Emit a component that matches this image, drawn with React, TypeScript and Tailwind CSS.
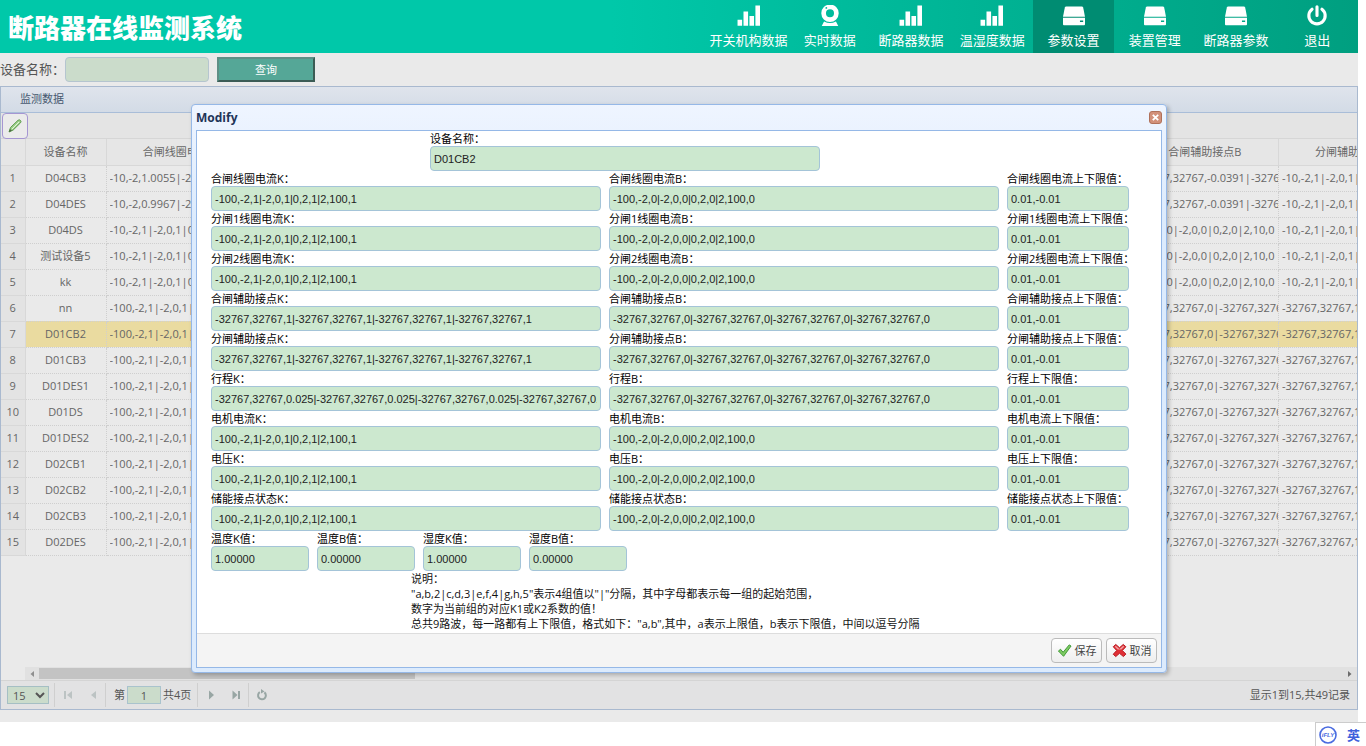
import React, { useId } from "react";

type NavIcon = "bars" | "camera" | "disk" | "power";

const navItems: { label: string; icon: NavIcon; active?: boolean }[] = [
  { label: "开关机构数据", icon: "bars" },
  { label: "实时数据", icon: "camera" },
  { label: "断路器数据", icon: "bars" },
  { label: "温湿度数据", icon: "bars" },
  { label: "参数设置", icon: "disk", active: true },
  { label: "装置管理", icon: "disk" },
  { label: "断路器参数", icon: "disk" },
  { label: "退出", icon: "power" },
];

const columns = [
  "合闸线圈电流K",
  "合闸线圈电流B",
  "分闸1线圈电流K",
  "分闸1线圈电流B",
  "分闸2线圈电流K",
  "分闸2线圈电流B",
  "合闸辅助接点K",
  "合闸辅助接点B",
  "分闸辅助接点K",
];

const SHORT_K = "-10,-2,1|-2,0,1|0,2,1|2,10,1";
const SHORT_B = "-10,-2,0|-2,0,0|0,2,0|2,10,0";
const COIL_K = "-100,-2,1|-2,0,1|0,2,1|2,100,1";
const COIL_B = "-100,-2,0|-2,0,0|0,2,0|2,100,0";
const AUX_K = "-32767,32767,1|-32767,32767,1|-32767,32767,1|-32767,32767,1";
const AUX_B = "-32767,32767,0|-32767,32767,0|-32767,32767,0|-32767,32767,0";
const AUX_OFFSET = "-32767,32767,-0.0391|-32767,32767,-0.0391";
const TRAVEL_K =
  "-32767,32767,0.025|-32767,32767,0.025|-32767,32767,0.025|-32767,32767,0.025";

const shortRow = (first: string, auxB: string) => [
  first, SHORT_B, SHORT_K, SHORT_B, SHORT_K, SHORT_B, SHORT_K, auxB, SHORT_K,
];
const longRow = [COIL_K, COIL_B, COIL_K, COIL_B, COIL_K, COIL_B, AUX_K, AUX_B, AUX_K];

const rows: { name: string; cells: string[] }[] = [
  { name: "D04CB3", cells: shortRow("-10,-2,1.0055|-2,0,1.0055", AUX_OFFSET) },
  { name: "D04DES", cells: shortRow("-10,-2,0.9967|-2,0,0.9967", AUX_OFFSET) },
  { name: "D04DS", cells: shortRow(SHORT_K, SHORT_B) },
  { name: "测试设备5", cells: shortRow(SHORT_K, SHORT_B) },
  { name: "kk", cells: shortRow(SHORT_K, SHORT_B) },
  ...["nn", "D01CB2", "D01CB3", "D01DES1", "D01DS", "D01DES2", "D02CB1", "D02CB2", "D02CB3", "D02DES"].map(
    (name) => ({ name, cells: longRow }),
  ),
];

const groups = [
  { label: "合闸线圈电流", k: COIL_K, b: COIL_B },
  { label: "分闸1线圈电流", k: COIL_K, b: COIL_B },
  { label: "分闸2线圈电流", k: COIL_K, b: COIL_B },
  { label: "合闸辅助接点", k: AUX_K, b: AUX_B },
  { label: "分闸辅助接点", k: AUX_K, b: AUX_B },
  { label: "行程", k: TRAVEL_K, b: AUX_B },
  { label: "电机电流", k: COIL_K, b: COIL_B },
  { label: "电压", k: COIL_K, b: COIL_B },
  { label: "储能接点状态", k: COIL_K, b: COIL_B },
];

function NavGlyph({ icon }: { icon: NavIcon }) {
  if (icon === "bars") {
    return (
      <svg viewBox="0 0 26 24" className="h-6 w-[26px]" fill="currentColor" aria-hidden="true">
        <path d="M0.500 16h5v6.500h-5zM7 7h5v15.500H7zM13.500 12h5v10.500h-5zM20 0.500h5v22h-5z" />
      </svg>
    );
  }
  if (icon === "camera") {
    return (
      <svg viewBox="0 0 26 24" className="h-6 w-[26px]" fill="currentColor" aria-hidden="true">
        <path
          fillRule="evenodd"
          d="M13 -0.500a9.500 9.500 0 0 1 0 19a9.500 9.500 0 0 1 0-19zM13 4.600a4.400 4.400 0 1 0 0 8.800a4.400 4.400 0 0 0 0-8.800zM9 2.200a1 1 0 1 0 0 2a1 1 0 0 0 0-2z"
        />
        <path d="M6.500 18Q13 21.500 19.500 18L22 23H4z" />
      </svg>
    );
  }
  if (icon === "disk") {
    return (
      <svg viewBox="0 0 26 24" className="h-6 w-[26px]" fill="currentColor" aria-hidden="true">
        <path d="M4.500 1.500h17q1.200 0 1.500 1.200L25 12.800H1L3 2.700Q3.300 1.500 4.500 1.500z" />
        <path fillRule="evenodd" d="M1 14h24v7q0 1-1 1H2q-1 0-1-1zM19.500 17v1.600h3.500V17z" />
      </svg>
    );
  }
  return (
    <svg
      viewBox="0 0 26 24"
      className="h-6 w-[26px]"
      fill="none"
      stroke="currentColor"
      strokeWidth="3.400"
      strokeLinecap="round"
      aria-hidden="true"
    >
      <path d="M13 2v9.500M7.600 4.600a8.900 8.900 0 1 0 10.800 0" />
    </svg>
  );
}

function Field({ label, value, className }: { label: string; value: string; className: string }) {
  const id = useId();
  return (
    <div className={className}>
      <label htmlFor={id} className="block h-[15px] whitespace-nowrap text-[11px] leading-[15px] text-black">
        {label}
      </label>
      <input
        id={id}
        type="text"
        defaultValue={value}
        className="block h-[25px] w-full rounded-[4px] border border-[#a4c4d8] bg-[#cce8cf] px-[3px] font-['Liberation_Sans',Arial,sans-serif] text-[11px] text-[#222] outline-none"
      />
    </div>
  );
}

function PagerButton({ label, dim, children }: { label: string; dim?: boolean; children: React.ReactNode }) {
  return (
    <button
      type="button"
      aria-label={label}
      className={
        dim
          ? "flex h-6 w-[25px] items-center justify-center text-[#bcc3c3]"
          : "flex h-6 w-[25px] items-center justify-center text-[#98a6a4]"
      }
    >
      <svg viewBox="0 0 12 12" className="size-3" fill="currentColor" aria-hidden="true">
        {children}
      </svg>
    </button>
  );
}

function Header() {
  return (
    <header className="flex h-[53px] items-stretch justify-between bg-linear-to-r from-[#00c8a9] from-45% to-[#009f80] font-['Noto_Sans_CJK_SC',sans-serif] text-white">
      <h1 className="flex items-center whitespace-nowrap pl-2 text-[26px] font-black leading-none">
        断路器在线监测系统
      </h1>
      <nav className="flex w-[650px]">
        {navItems.map((item) => (
          <a
            key={item.label}
            href="#"
            className={
              item.active
                ? "flex flex-1 flex-col items-center whitespace-nowrap bg-[#008c72] pt-[5px] text-[13px] leading-[26px]"
                : "flex flex-1 flex-col items-center whitespace-nowrap pt-[5px] text-[13px] leading-[26px]"
            }
          >
            <NavGlyph icon={item.icon} />
            {item.label}
          </a>
        ))}
      </nav>
    </header>
  );
}

function SearchBar() {
  return (
    <form className="flex h-[33px] items-center" onSubmit={(e) => e.preventDefault()}>
      <label htmlFor="device-search" className="w-[65px] whitespace-nowrap text-[13px] text-[#555]">
        设备名称：
      </label>
      <input
        id="device-search"
        type="text"
        className="h-[25px] w-36 rounded-[4px] border border-[#b5c5cf] bg-[#cbdccb] px-1 text-[11px] outline-none"
      />
      <button
        type="submit"
        className="ml-2 h-[25px] w-[98px] border-2 border-b-[#3c5c55] border-l-[#5f8f86] border-r-[#3c5c55] border-t-[#5f8f86] bg-[#55a797] text-[11px] leading-none text-white"
      >
        查询
      </button>
    </form>
  );
}

function DataGrid() {
  return (
    <section className="border border-[#a9b9cf] bg-[#eaeaea]">
      <h2 className="h-[26px] border-b border-[#a9bdd8] bg-linear-to-b from-[#dfe4ec] to-[#d3dbe6] pl-[19px] text-[11px] leading-[24px] text-[#46586f]">
        监测数据
      </h2>
      <div className="flex h-[26px] items-center border-b border-[#d6d6d6] bg-[#e4e4e4]">
        <button
          type="button"
          aria-label="编辑"
          className="ml-px flex size-[26px] items-center justify-center rounded-[4px] border border-[#a596d2] bg-[#ebebeb]"
        >
          <svg viewBox="0 0 16 16" className="size-4" aria-hidden="true">
            <path d="M2 14l1.500-4.500L11 2.300q1.500-1 2.500.2t0 2.300L6.200 12z" fill="#9fd08c" stroke="#5b9a4b" strokeWidth="1" />
            <path d="M2 14l1-3 2 1.800z" fill="#4d6b45" />
            <path d="M5 11l7-7" stroke="#e3f3dc" strokeWidth="1" />
          </svg>
        </button>
      </div>
      <div className="h-[528px] overflow-hidden">
        <table className="w-[1424px] table-fixed border-collapse text-[11px] text-[#666]">
          <colgroup>
            <col className="w-[24px]" />
            <col className="w-[81px]" />
            {columns.map((c, i) => (
              <col key={c} className={i % 2 ? "w-[147px]" : "w-[146px]"} />
            ))}
          </colgroup>
          <thead>
            <tr className="h-[26px] bg-[#e6e6e6]">
              <th aria-label="序号" className="border-b border-r border-[#d8d8d8]" />
              <th className="border-b border-r border-[#d8d8d8] p-0 font-normal">设备名称</th>
              {columns.map((c) => (
                <th key={c} className="overflow-hidden whitespace-nowrap border-b border-r border-[#d8d8d8] p-0 font-normal">
                  {c}
                </th>
              ))}
            </tr>
          </thead>
          <tbody>
            {rows.map((row, i) => (
              <tr key={row.name} className={i === 6 ? "h-[26px] bg-[#eadba0]" : "h-[26px]"}>
                <td className="border-b border-r border-[#d8d8d8] bg-[#e3e3e3] p-0 text-center">{i + 1}</td>
                <td className="border-b border-r border-dotted border-[#cfcfcf] p-0 text-center">{row.name}</td>
                {row.cells.map((cell, j) => (
                  <td key={columns[j]} className="border-b border-r border-dotted border-[#cfcfcf] py-0 pl-[3px] pr-0">
                    <div className="overflow-hidden whitespace-nowrap">{cell}</div>
                  </td>
                ))}
              </tr>
            ))}
          </tbody>
        </table>
      </div>
      <div className="flex h-[13px] items-center bg-[#e1e1e1]">
        <div className="h-full w-6 bg-[#eaeaea]" />
        <svg viewBox="0 0 14 12" className="h-3 w-[14px]" fill="#8f8f8f" aria-hidden="true">
          <path d="M9 3v6L5.500 6z" />
        </svg>
        <div className="h-[11px] w-[376px] bg-[#c3c3c3]" />
        <svg viewBox="0 0 14 12" className="ml-auto h-3 w-[14px]" fill="#6c6c6c" aria-hidden="true">
          <path d="M5 3v6l3.500-3z" />
        </svg>
      </div>
      <div className="flex h-[29px] items-center border-t border-[#d4d4d4] bg-[#e2e2e3] text-[11px] text-[#555]">
        <select
          aria-label="每页条数"
          defaultValue="15"
          className="ml-1.5 h-[18px] w-[42px] border border-[#a5bfc4] bg-[#cbdccb] pl-px text-[11px] leading-none"
        >
          <option>15</option>
          <option>30</option>
        </select>
        <div className="ml-[5px] h-6 w-px bg-[#cfcfcf]" />
        <PagerButton label="首页" dim>
          <path d="M2 2h2v8H2zM10 2v8L5 6z" />
        </PagerButton>
        <PagerButton label="上一页" dim>
          <path d="M9 2v8L4 6z" />
        </PagerButton>
        <div className="mr-2 h-6 w-px bg-[#cfcfcf]" />
        <label htmlFor="page-number" className="w-[13px]">
          第
        </label>
        <input
          id="page-number"
          type="text"
          defaultValue="1"
          className="mr-0.5 h-[18px] w-[34px] border border-[#a9c3cd] bg-[#cbdccb] text-center outline-none"
        />
        <span className="w-[34px]">共4页</span>
        <div className="h-6 w-px bg-[#cfcfcf]" />
        <PagerButton label="下一页">
          <path d="M4 1.500v9L9 6z" />
        </PagerButton>
        <PagerButton label="末页">
          <path d="M2.500 1.500v9L7.500 6zM8 2h2v8H8z" />
        </PagerButton>
        <div className="h-6 w-px bg-[#cfcfcf]" />
        <PagerButton label="刷新">
          <path d="M3.800 3.200a3.900 3.900 0 1 0 4.600.2" fill="none" stroke="currentColor" strokeWidth="2" />
          <path d="M5 0v4.500L8.500 2.500z" />
        </PagerButton>
        <span className="ml-auto pr-[7px]">显示1到15,共49记录</span>
      </div>
    </section>
  );
}

function ModifyDialog() {
  const button =
    "flex h-[25px] w-[51px] items-center justify-center gap-[3px] whitespace-nowrap rounded-[4px] border border-[#bbb] bg-linear-to-b from-white to-[#eee] text-[11px] leading-none text-[#444]";
  return (
    <div
      role="dialog"
      aria-labelledby="modify-title"
      className="absolute left-1/2 top-[104px] w-[976px] -translate-x-1/2 rounded-[4px] border border-[#95b8e7] bg-linear-to-b from-[#eff5ff] to-[#dcebfd] to-20% px-1 pb-1 shadow-[2px_2px_4px_rgba(0,0,0,0.25)]"
    >
      <div className="flex h-[25px] items-center justify-between">
        <h2 id="modify-title" className="text-[12px] font-bold text-[#1f3558]">
          Modify
        </h2>
        <button
          type="button"
          aria-label="关闭"
          className="flex size-[13px] items-center justify-center rounded-[3px] border border-[#b0715a] bg-[#d2917a]"
        >
          <svg viewBox="0 0 10 10" className="size-[9px]" stroke="#fff" strokeWidth="2" aria-hidden="true">
            <path d="M2 2l6 6M8 2L2 8" />
          </svg>
        </button>
      </div>
      <form className="border border-[#95b8e7] bg-white" onSubmit={(e) => e.preventDefault()}>
        <div className="px-[14px]">
          <Field label="设备名称：" value="D01CB2" className="ml-[219px] w-[390px]" />
          {groups.map((g) => (
            <div key={g.label} className="flex gap-2">
              <Field label={`${g.label}K：`} value={g.k} className="w-[390px]" />
              <Field label={`${g.label}B：`} value={g.b} className="w-[390px]" />
              <Field label={`${g.label}上下限值：`} value="0.01,-0.01" className="w-[122px]" />
            </div>
          ))}
          <div className="flex gap-2">
            <Field label="温度K值：" value="1.00000" className="w-[98px]" />
            <Field label="温度B值：" value="0.00000" className="w-[98px]" />
            <Field label="湿度K值：" value="1.00000" className="w-[98px]" />
            <Field label="湿度B值：" value="0.00000" className="w-[98px]" />
          </div>
          <div className="ml-[200px] pb-0.5 text-[11px] leading-[15px] text-[#111]">
            <p>说明：</p>
            <p>"a,b,2|c,d,3|e,f,4|g,h,5"表示4组值以"|"分隔，其中字母都表示每一组的起始范围，</p>
            <p>数字为当前组的对应K1或K2系数的值！</p>
            <p>总共9路波，每一路都有上下限值，格式如下："a,b",其中，a表示上限值，b表示下限值，中间以逗号分隔</p>
          </div>
        </div>
        <div className="flex h-[34px] items-center justify-end gap-1 border-t border-[#ddd] bg-[#f4f4f4] pr-1">
          <button type="submit" className={button}>
            <svg viewBox="0 0 16 16" className="size-[15px]" aria-hidden="true">
              <path d="M1.500 8.500l2.300-1.800 2.700 3.200L13 2l2 1.200L7 14.200z" fill="#7ecb62" stroke="#3a9430" strokeWidth="1" strokeLinejoin="round" />
            </svg>
            保存
          </button>
          <button type="button" className={button}>
            <svg viewBox="0 0 16 16" className="size-[15px]" aria-hidden="true">
              <path
                d="M4 1.500L8 5l4-3.500L14.800 4 11 8l3.800 3.800-2.600 2.700L8 11l-4 3.500L1.300 12 5 8 1.300 4z"
                fill="#e02f35"
                stroke="#b3141c"
                strokeWidth="1"
                strokeLinejoin="round"
              />
              <path d="M4 3l4 3.500L12 3l1 1-3 3H6L3 4z" fill="#f0a0a0" />
            </svg>
            取消
          </button>
        </div>
      </form>
    </div>
  );
}

export default function App() {
  return (
    <div className="min-h-screen overflow-hidden bg-white font-['Open_Sans','Noto_Sans_CJK_SC',sans-serif]">
      <main className="relative mr-2 bg-[#eaeaea] pb-3">
        <Header />
        <SearchBar />
        <DataGrid />
        <ModifyDialog />
      </main>
      <div className="fixed bottom-0 right-0 flex h-6 w-[51px] items-center justify-between border-l border-t border-[#ccc] bg-white pl-0.5 pr-1.5">
        <svg viewBox="0 0 20 20" className="size-5" aria-hidden="true">
          <circle cx="10" cy="10" r="8" fill="#fff" stroke="#4a6be0" strokeWidth="1.600" />
          <text x="10" y="12.200" textAnchor="middle" fontSize="6" fontWeight="700" fontStyle="italic" fontFamily="Liberation Sans, sans-serif" fill="#4a6be0">
            iFLY
          </text>
        </svg>
        <span className="font-['Noto_Sans_CJK_SC',sans-serif] text-[13px] font-bold leading-none text-[#3f62dc]">英</span>
      </div>
    </div>
  );
}
